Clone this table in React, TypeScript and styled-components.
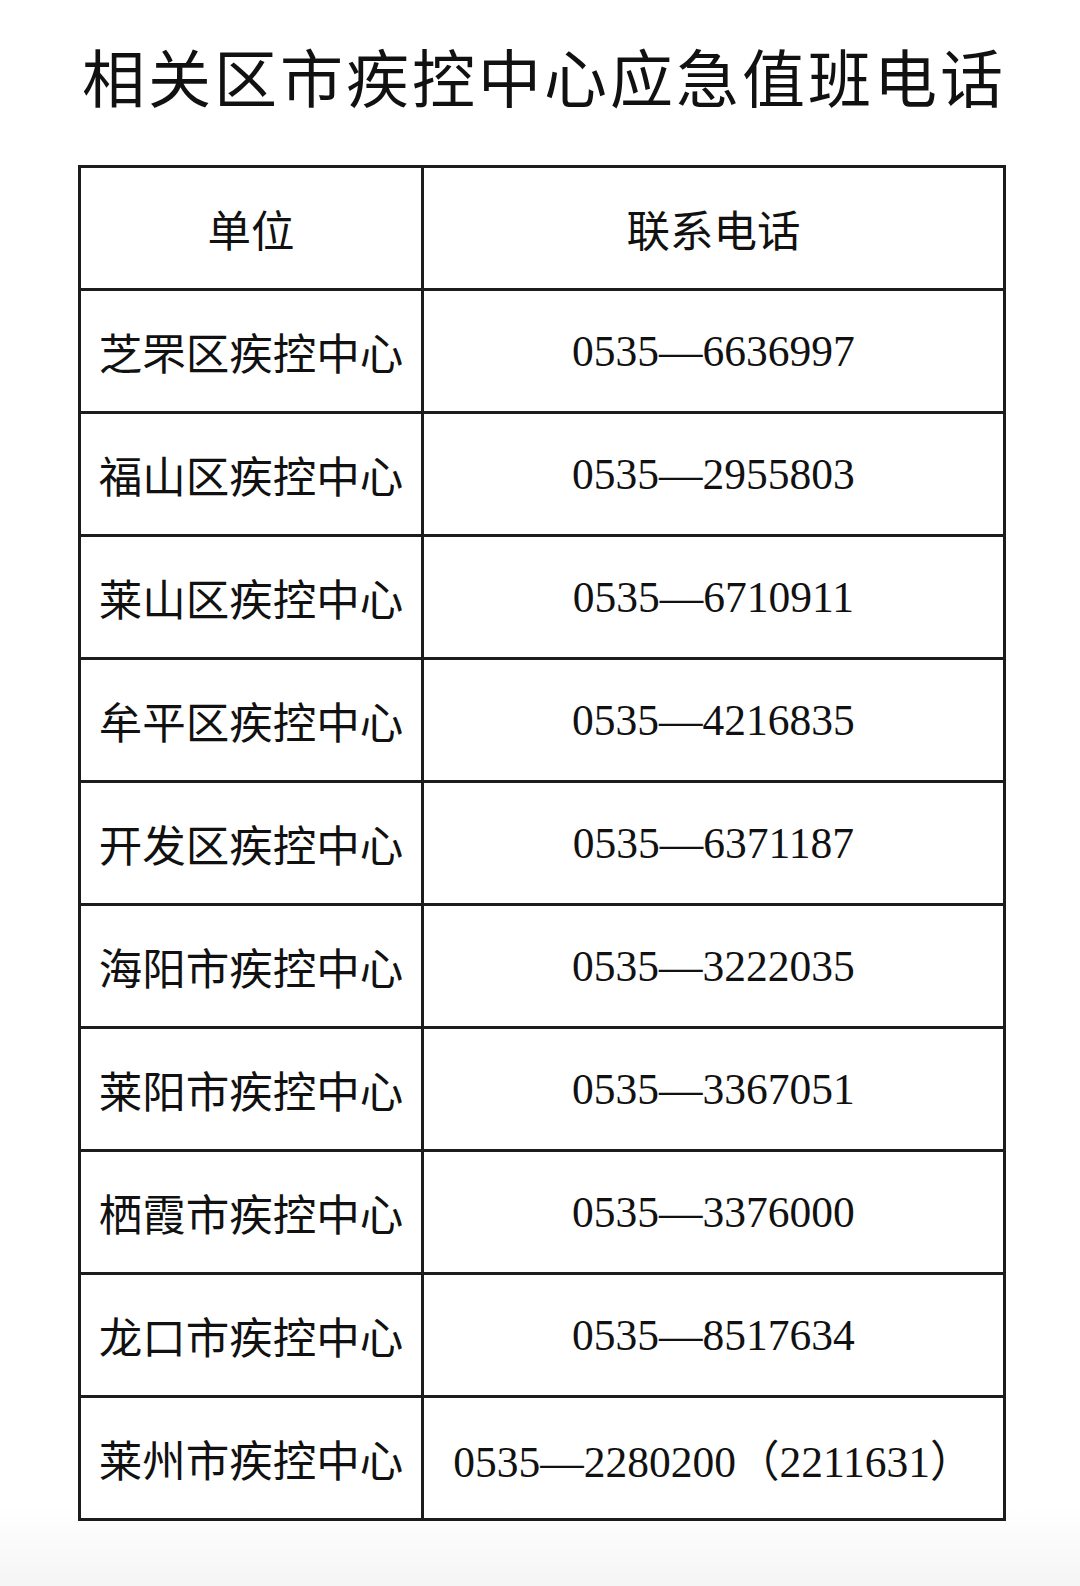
import React from 'react';
import styled, { createGlobalStyle } from 'styled-components';

const GlobalStyle = createGlobalStyle`
  html, body {
    margin: 0;
    padding: 0;
    background: #fff;
  }
  body {
    font-family: "Noto Sans CJK SC", "Noto Sans", sans-serif;
    color: #141414;
  }
`;

const Page = styled.div`
  width: 1080px;
  min-height: 1586px;
  box-sizing: border-box;
  padding-top: 35px;
  background: linear-gradient(to bottom, #ffffff 0%, #ffffff 95%, #f5f5f5 100%);
`;

const Title = styled.h1`
  margin: 0 0 50px;
  padding-left: 8px;
  height: 80px;
  line-height: 80px;
  text-align: center;
  font-size: 63px;
  font-weight: 400;
  letter-spacing: 3px;
  color: #111;
`;

const Table = styled.table`
  margin-left: 78px;
  width: 928px;
  border-collapse: collapse;
  border: 3px solid #1c1c1c;
`;

const Cell = styled.td<{ $serif?: boolean }>`
  border: 3px solid #1c1c1c;
  height: 120px;
  padding: 0;
  text-align: center;
  vertical-align: middle;
  font-size: 43.5px;
  font-family: ${(p) =>
    p.$serif
      ? '"Liberation Serif", "Noto Sans CJK SC", serif'
      : '"Noto Sans CJK SC", sans-serif'};
  white-space: nowrap;
  color: #111;
`;

const UnitCol = styled.col`
  width: 344px;
`;

const PhoneCol = styled.col`
  width: 584px;
`;

const rows: [string, string][] = [
  ['芝罘区疾控中心', '0535—6636997'],
  ['福山区疾控中心', '0535—2955803'],
  ['莱山区疾控中心', '0535—6710911'],
  ['牟平区疾控中心', '0535—4216835'],
  ['开发区疾控中心', '0535—6371187'],
  ['海阳市疾控中心', '0535—3222035'],
  ['莱阳市疾控中心', '0535—3367051'],
  ['栖霞市疾控中心', '0535—3376000'],
  ['龙口市疾控中心', '0535—8517634'],
  ['莱州市疾控中心', '0535—2280200（2211631）'],
];

const App: React.FC = () => (
  <>
    <GlobalStyle />
    <Page>
      <Title>相关区市疾控中心应急值班电话</Title>
      <Table>
        <colgroup>
          <UnitCol />
          <PhoneCol />
        </colgroup>
        <tbody>
          <tr>
            <Cell>单位</Cell>
            <Cell>联系电话</Cell>
          </tr>
          {rows.map(([unit, phone]) => (
            <tr key={unit}>
              <Cell>{unit}</Cell>
              <Cell $serif>{phone}</Cell>
            </tr>
          ))}
        </tbody>
      </Table>
    </Page>
  </>
);

export default App;
